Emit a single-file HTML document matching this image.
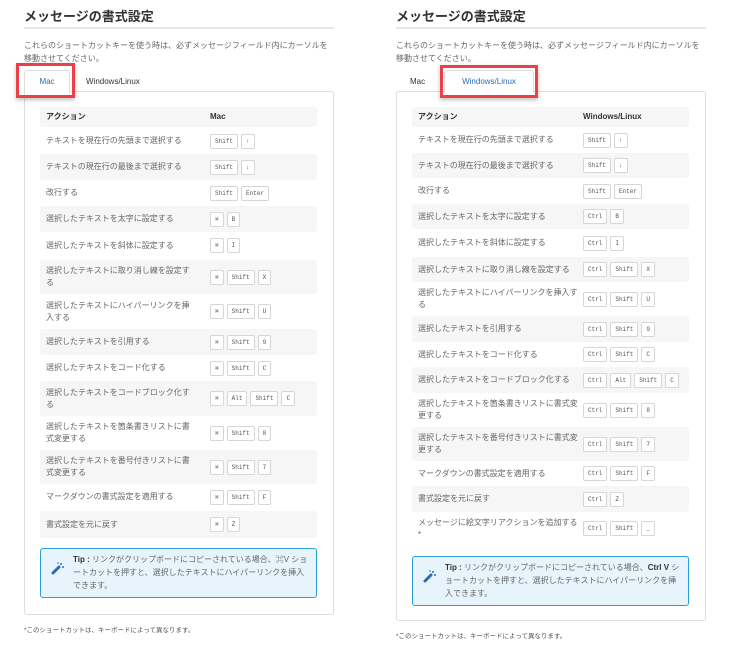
<!DOCTYPE html>
<html><head><meta charset="utf-8">
<style>
*{margin:0;padding:0;box-sizing:border-box}
body{width:729px;height:651px;background:#fff;position:relative;overflow:hidden;font-family:"Liberation Sans","Noto Sans CJK JP",sans-serif;color:#555}
.abs{position:absolute}
h1{position:absolute;font-size:13px;font-weight:bold;color:#333;top:6px}
.hr{position:absolute;height:2px;background:#e8e8e8}
.desc{position:absolute;font-size:8px;line-height:13px;color:#666}
.tab{position:absolute;font-size:8px;color:#333;text-align:center}
.panel{position:absolute;border:1px solid #ddd;border-radius:3px;background:#fff}
.row{position:absolute;display:flex;align-items:center;font-size:8px;line-height:12px;color:#666;border-radius:3px}
.row.g{background:#f6f6f6}
.row .l{position:absolute;left:6px}
.row .k{position:absolute;display:flex;gap:3px}
.row.h{color:#333;font-weight:bold}
kbd{display:inline-block;height:15px;line-height:13px;border:1px solid #d6d6d6;border-radius:2px;background:#fff;font-family:"Liberation Mono",monospace;font-size:6px;color:#555;padding:0 4px;text-align:center}
.red{position:absolute;border:3px solid #e8414a;box-shadow:0 2px 4px rgba(0,0,0,.25)}
.tip{position:absolute;border:1px solid #2a9fd8;border-radius:3px;background:#e7f4fb;font-size:8px;line-height:13px;color:#666}
.tip b{color:#333}
.foot{position:absolute;font-size:6.5px;color:#555}
</style></head><body>

<!-- LEFT -->
<h1 style="left:24px">メッセージの書式設定</h1>
<div class="hr" style="left:24px;top:27px;width:310px"></div>
<div class="desc" style="left:24px;top:39px;width:310px">これらのショートカットキーを使う時は、必ずメッセージフィールド内にカーソルを移動させてください。</div>
<div class="panel" style="left:24px;top:91px;width:310px;height:524px"></div>
<div class="abs" style="left:24px;top:70px;width:46px;height:23px;background:#fff;border:1px solid #ddd;border-bottom:none;border-radius:3px 3px 0 0"></div>
<div class="tab" style="left:24px;top:77px;width:46px;color:#2a6db5">Mac</div>
<div class="tab" style="left:86px;top:77px">Windows/Linux</div>
<div class="red" style="left:16px;top:63px;width:59px;height:35px"></div>

<div class="row g h" style="left:40px;top:107px;width:277px;height:20px"><span class="l">アクション</span><span class="l" style="left:170px">Mac</span></div>
<div class="row" style="left:40px;top:128px;width:277px;height:26px"><span class="l">テキストを現在行の先頭まで選択する</span><span class="k" style="left:170px"><kbd>Shift</kbd><kbd>↑</kbd></span></div>
<div class="row g" style="left:40px;top:154px;width:277px;height:26px"><span class="l">テキストの現在行の最後まで選択する</span><span class="k" style="left:170px"><kbd>Shift</kbd><kbd>↓</kbd></span></div>
<div class="row" style="left:40px;top:180px;width:277px;height:26px"><span class="l">改行する</span><span class="k" style="left:170px"><kbd>Shift</kbd><kbd>Enter</kbd></span></div>
<div class="row g" style="left:40px;top:206px;width:277px;height:26px"><span class="l">選択したテキストを太字に設定する</span><span class="k" style="left:170px"><kbd>⌘</kbd><kbd>B</kbd></span></div>
<div class="row" style="left:40px;top:232px;width:277px;height:27px"><span class="l">選択したテキストを斜体に設定する</span><span class="k" style="left:170px"><kbd>⌘</kbd><kbd>I</kbd></span></div>
<div class="row g" style="left:40px;top:260px;width:277px;height:34px"><span class="l" style="width:150px">選択したテキストに取り消し線を設定する</span><span class="k" style="left:170px"><kbd>⌘</kbd><kbd>Shift</kbd><kbd>X</kbd></span></div>
<div class="row" style="left:40px;top:294px;width:277px;height:35px"><span class="l" style="width:150px">選択したテキストにハイパーリンクを挿入する</span><span class="k" style="left:170px"><kbd>⌘</kbd><kbd>Shift</kbd><kbd>U</kbd></span></div>
<div class="row g" style="left:40px;top:329px;width:277px;height:26px"><span class="l">選択したテキストを引用する</span><span class="k" style="left:170px"><kbd>⌘</kbd><kbd>Shift</kbd><kbd>9</kbd></span></div>
<div class="row" style="left:40px;top:355px;width:277px;height:26px"><span class="l">選択したテキストをコード化する</span><span class="k" style="left:170px"><kbd>⌘</kbd><kbd>Shift</kbd><kbd>C</kbd></span></div>
<div class="row g" style="left:40px;top:381px;width:277px;height:35px"><span class="l" style="width:150px">選択したテキストをコードブロック化する</span><span class="k" style="left:170px"><kbd>⌘</kbd><kbd>Alt</kbd><kbd>Shift</kbd><kbd>C</kbd></span></div>
<div class="row" style="left:40px;top:416px;width:277px;height:34px"><span class="l" style="width:150px">選択したテキストを箇条書きリストに書式変更する</span><span class="k" style="left:170px"><kbd>⌘</kbd><kbd>Shift</kbd><kbd>8</kbd></span></div>
<div class="row g" style="left:40px;top:450px;width:277px;height:34px"><span class="l" style="width:150px">選択したテキストを番号付きリストに書式変更する</span><span class="k" style="left:170px"><kbd>⌘</kbd><kbd>Shift</kbd><kbd>7</kbd></span></div>
<div class="row" style="left:40px;top:484px;width:277px;height:26px"><span class="l">マークダウンの書式設定を適用する</span><span class="k" style="left:170px"><kbd>⌘</kbd><kbd>Shift</kbd><kbd>F</kbd></span></div>
<div class="row g" style="left:40px;top:511px;width:277px;height:27px"><span class="l">書式設定を元に戻す</span><span class="k" style="left:170px"><kbd>⌘</kbd><kbd>Z</kbd></span></div>

<div class="tip" style="left:40px;top:548px;width:277px;height:50px">
<svg class="abs" style="left:10px;top:12px" width="14" height="14" viewBox="0 0 14 14"><path d="M2 12 L8 6" stroke="#2a6db5" stroke-width="3" stroke-linecap="round"/><circle cx="10" cy="3" r="1" fill="#2a6db5"/><circle cx="12" cy="6" r="1" fill="#2a6db5"/><circle cx="7" cy="2" r="0.8" fill="#2a6db5"/></svg>
<div class="abs" style="left:32px;top:4px;width:238px"><b>Tip :</b> リンクがクリップボードにコピーされている場合、⌘V ショートカットを押すと、選択したテキストにハイパーリンクを挿入できます。</div></div>
<div class="foot" style="left:24px;top:624px">*このショートカットは、キーボードによって異なります。</div>

<!-- RIGHT -->
<h1 style="left:396px">メッセージの書式設定</h1>
<div class="hr" style="left:396px;top:27px;width:310px"></div>
<div class="desc" style="left:396px;top:39px;width:310px">これらのショートカットキーを使う時は、必ずメッセージフィールド内にカーソルを移動させてください。</div>
<div class="panel" style="left:396px;top:91px;width:310px;height:530px"></div>
<div class="abs" style="left:444px;top:70px;width:90px;height:23px;background:#fff;border:1px solid #ddd;border-bottom:none;border-radius:3px 3px 0 0"></div>
<div class="tab" style="left:410px;top:77px">Mac</div>
<div class="tab" style="left:444px;top:77px;width:90px;color:#2a6db5">Windows/Linux</div>
<div class="red" style="left:440px;top:65px;width:98px;height:33px"></div>

<div class="row g h" style="left:412px;top:107px;width:277px;height:20px"><span class="l">アクション</span><span class="l" style="left:171px">Windows/Linux</span></div>
<div class="row" style="left:412px;top:127px;width:277px;height:26px"><span class="l">テキストを現在行の先頭まで選択する</span><span class="k" style="left:171px"><kbd>Shift</kbd><kbd>↑</kbd></span></div>
<div class="row g" style="left:412px;top:153px;width:277px;height:25px"><span class="l">テキストの現在行の最後まで選択する</span><span class="k" style="left:171px"><kbd>Shift</kbd><kbd>↓</kbd></span></div>
<div class="row" style="left:412px;top:178px;width:277px;height:26px"><span class="l">改行する</span><span class="k" style="left:171px"><kbd>Shift</kbd><kbd>Enter</kbd></span></div>
<div class="row g" style="left:412px;top:204px;width:277px;height:25px"><span class="l">選択したテキストを太字に設定する</span><span class="k" style="left:171px"><kbd>Ctrl</kbd><kbd>B</kbd></span></div>
<div class="row" style="left:412px;top:229px;width:277px;height:28px"><span class="l">選択したテキストを斜体に設定する</span><span class="k" style="left:171px"><kbd>Ctrl</kbd><kbd>I</kbd></span></div>
<div class="row g" style="left:412px;top:257px;width:277px;height:25px"><span class="l">選択したテキストに取り消し線を設定する</span><span class="k" style="left:171px"><kbd>Ctrl</kbd><kbd>Shift</kbd><kbd>X</kbd></span></div>
<div class="row" style="left:412px;top:282px;width:277px;height:34px"><span class="l" style="width:160px">選択したテキストにハイパーリンクを挿入する</span><span class="k" style="left:171px"><kbd>Ctrl</kbd><kbd>Shift</kbd><kbd>U</kbd></span></div>
<div class="row g" style="left:412px;top:316px;width:277px;height:26px"><span class="l">選択したテキストを引用する</span><span class="k" style="left:171px"><kbd>Ctrl</kbd><kbd>Shift</kbd><kbd>9</kbd></span></div>
<div class="row" style="left:412px;top:342px;width:277px;height:25px"><span class="l">選択したテキストをコード化する</span><span class="k" style="left:171px"><kbd>Ctrl</kbd><kbd>Shift</kbd><kbd>C</kbd></span></div>
<div class="row g" style="left:412px;top:367px;width:277px;height:26px"><span class="l">選択したテキストをコードブロック化する</span><span class="k" style="left:171px"><kbd>Ctrl</kbd><kbd>Alt</kbd><kbd>Shift</kbd><kbd>C</kbd></span></div>
<div class="row" style="left:412px;top:393px;width:277px;height:34px"><span class="l" style="width:160px">選択したテキストを箇条書きリストに書式変更する</span><span class="k" style="left:171px"><kbd>Ctrl</kbd><kbd>Shift</kbd><kbd>8</kbd></span></div>
<div class="row g" style="left:412px;top:427px;width:277px;height:34px"><span class="l" style="width:160px">選択したテキストを番号付きリストに書式変更する</span><span class="k" style="left:171px"><kbd>Ctrl</kbd><kbd>Shift</kbd><kbd>7</kbd></span></div>
<div class="row" style="left:412px;top:461px;width:277px;height:25px"><span class="l">マークダウンの書式設定を適用する</span><span class="k" style="left:171px"><kbd>Ctrl</kbd><kbd>Shift</kbd><kbd>F</kbd></span></div>
<div class="row g" style="left:412px;top:486px;width:277px;height:26px"><span class="l">書式設定を元に戻す</span><span class="k" style="left:171px"><kbd>Ctrl</kbd><kbd>Z</kbd></span></div>
<div class="row" style="left:412px;top:512px;width:277px;height:33px"><span class="l" style="width:160px">メッセージに絵文字リアクションを追加する*</span><span class="k" style="left:171px"><kbd>Ctrl</kbd><kbd>Shift</kbd><kbd>_</kbd></span></div>

<div class="tip" style="left:412px;top:556px;width:277px;height:50px">
<svg class="abs" style="left:10px;top:12px" width="14" height="14" viewBox="0 0 14 14"><path d="M2 12 L8 6" stroke="#2a6db5" stroke-width="3" stroke-linecap="round"/><circle cx="10" cy="3" r="1" fill="#2a6db5"/><circle cx="12" cy="6" r="1" fill="#2a6db5"/><circle cx="7" cy="2" r="0.8" fill="#2a6db5"/></svg>
<div class="abs" style="left:32px;top:4px;width:238px"><b>Tip :</b> リンクがクリップボードにコピーされている場合、<b>Ctrl V</b> ショートカットを押すと、選択したテキストにハイパーリンクを挿入できます。</div></div>
<div class="foot" style="left:396px;top:630px">*このショートカットは、キーボードによって異なります。</div>
</body></html>
